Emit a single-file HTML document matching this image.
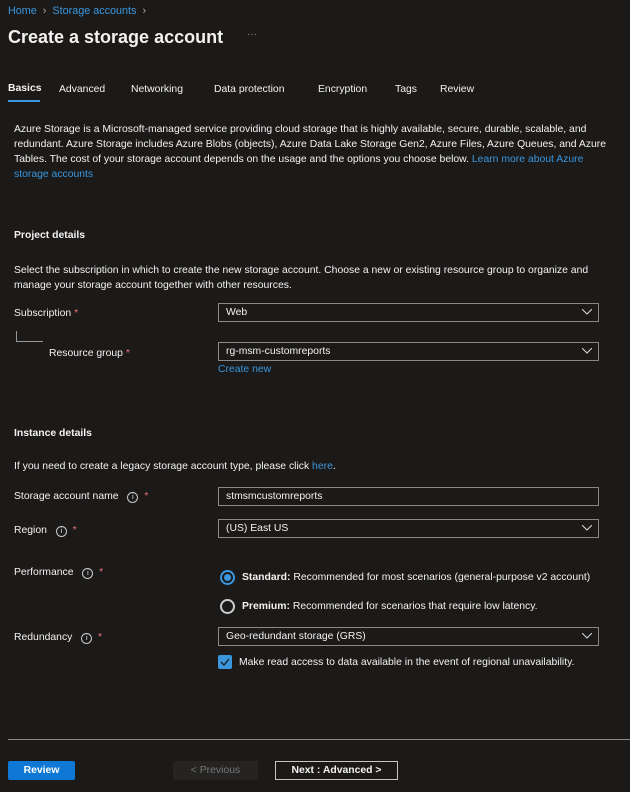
<!DOCTYPE html><html><head><style>
body{margin:0;width:630px;height:792px;background:#1b1a19;font-family:"Liberation Sans",sans-serif;font-size:10.4px;color:#f3f2f1;position:relative;overflow:hidden}
.a{position:absolute;white-space:nowrap}
.l{color:#3a96dd}
.b{font-weight:bold}
.in{position:absolute;left:218px;width:379px;height:17px;border:1px solid #8a8886;box-sizing:content-box;background:#1b1a19}
.in span{position:absolute;left:7px;top:3px}
.chev{position:absolute;right:6px;top:5px;width:10px;height:6px}
.r{color:#f1707b}
.i{display:inline-block;width:9px;height:9px;border:1px solid #ccc;border-radius:50%;font-size:7px;text-align:center;line-height:9px;margin-left:6px;vertical-align:0}
</style></head><body>
<div class="a l" style="left:8px;top:5px;font-size:10.8px">Home <span style="color:#aaa">&nbsp;›&nbsp;</span> Storage accounts <span style="color:#aaa">&nbsp;›</span></div>
<div class="a" style="left:8px;top:27px;font-size:18px;font-weight:bold">Create a storage account</div>
<div class="a" style="left:247px;top:29px;color:#888">···</div>
<div class="a b" style="left:8px;top:83px">Basics</div>
<div class="a" style="left:8px;top:100px;width:32px;height:2px;background:#3a96dd"></div>
<div class="a" style="left:59px;top:84px">Advanced</div>
<div class="a" style="left:131px;top:84px">Networking</div>
<div class="a" style="left:214px;top:84px">Data protection</div>
<div class="a" style="left:318px;top:84px">Encryption</div>
<div class="a" style="left:395px;top:84px">Tags</div>
<div class="a" style="left:440px;top:84px">Review</div>
<div class="a" style="left:14px;top:122px;line-height:15px;white-space:normal;width:600px">Azure Storage is a Microsoft-managed service providing cloud storage that is highly available, secure, durable, scalable, and redundant. Azure Storage includes Azure Blobs (objects), Azure Data Lake Storage Gen2, Azure Files, Azure Queues, and Azure Tables. The cost of your storage account depends on the usage and the options you choose below. <span class="l">Learn more about Azure storage accounts</span></div>
<div class="a b" style="left:14px;top:230px">Project details</div>
<div class="a" style="left:14px;top:263px;line-height:15px;white-space:normal;width:600px">Select the subscription in which to create the new storage account. Choose a new or existing resource group to organize and manage your storage account together with other resources.</div>
<div class="a" style="left:14px;top:308px">Subscription <span class="r">*</span></div>
<div class="in" style="top:303px"><span>Web</span><svg class="chev" viewBox="0 0 10 6"><path d="M0 0L5 5L10 0" stroke="#ddd" fill="none"/></svg></div>
<div class="a" style="left:16px;top:331px;width:26px;height:10px;border-left:1px solid #999;border-bottom:1px solid #999"></div>
<div class="a" style="left:49px;top:348px">Resource group <span class="r">*</span></div>
<div class="in" style="top:342px"><span>rg-msm-customreports</span><svg class="chev" viewBox="0 0 10 6"><path d="M0 0L5 5L10 0" stroke="#ddd" fill="none"/></svg></div>
<div class="a l" style="left:218px;top:364px">Create new</div>
<div class="a b" style="left:14px;top:428px">Instance details</div>
<div class="a" style="left:14px;top:461px">If you need to create a legacy storage account type, please click <span class="l">here</span>.</div>
<div class="a" style="left:14px;top:491px">Storage account name <span class="i">i</span> &nbsp;<span class="r">*</span></div>
<div class="in" style="top:487px"><span>stmsmcustomreports</span></div>
<div class="a" style="left:14px;top:525px">Region <span class="i">i</span> &nbsp;<span class="r">*</span></div>
<div class="in" style="top:519px"><span>(US) East US</span><svg class="chev" viewBox="0 0 10 6"><path d="M0 0L5 5L10 0" stroke="#ddd" fill="none"/></svg></div>
<div class="a" style="left:14px;top:567px">Performance <span class="i">i</span> &nbsp;<span class="r">*</span></div>
<div class="a" style="left:220px;top:570px;width:11px;height:11px;border:2px solid #3a96dd;border-radius:50%"><div style="margin:2px;width:7px;height:7px;border-radius:50%;background:#3a96dd"></div></div>
<div class="a" style="left:242px;top:572px"><b>Standard:</b> Recommended for most scenarios (general-purpose v2 account)</div>
<div class="a" style="left:220px;top:599px;width:11px;height:11px;border:2px solid #ccc;border-radius:50%"></div>
<div class="a" style="left:242px;top:601px"><b>Premium:</b> Recommended for scenarios that require low latency.</div>
<div class="a" style="left:14px;top:632px">Redundancy <span class="i">i</span> &nbsp;<span class="r">*</span></div>
<div class="in" style="top:627px"><span>Geo-redundant storage (GRS)</span><svg class="chev" viewBox="0 0 10 6"><path d="M0 0L5 5L10 0" stroke="#ddd" fill="none"/></svg></div>
<div class="a" style="left:218px;top:655px;width:14px;height:14px;background:#3a96dd;border-radius:2px"><svg width="14" height="14" viewBox="0 0 14 14"><path d="M3 7l3 3l5-6" stroke="#1b1a19" stroke-width="1.3" fill="none"/></svg></div>
<div class="a" style="left:239px;top:657px">Make read access to data available in the event of regional unavailability.</div>
<div class="a" style="left:8px;top:739px;width:622px;height:1px;background:#8a8886"></div>
<div class="a" style="left:8px;top:761px;width:67px;height:19px;background:#0f78d4;border-radius:2px;text-align:center;line-height:19px;font-weight:bold;color:#fff">Review</div>
<div class="a" style="left:173px;top:761px;width:85px;height:19px;background:#252423;text-align:center;line-height:19px;color:#777">&lt; Previous</div>
<div class="a" style="left:275px;top:761px;width:121px;height:17px;border:1px solid #c8c6c4;text-align:center;line-height:17px;font-weight:bold">Next : Advanced &gt;</div>
</body></html>
